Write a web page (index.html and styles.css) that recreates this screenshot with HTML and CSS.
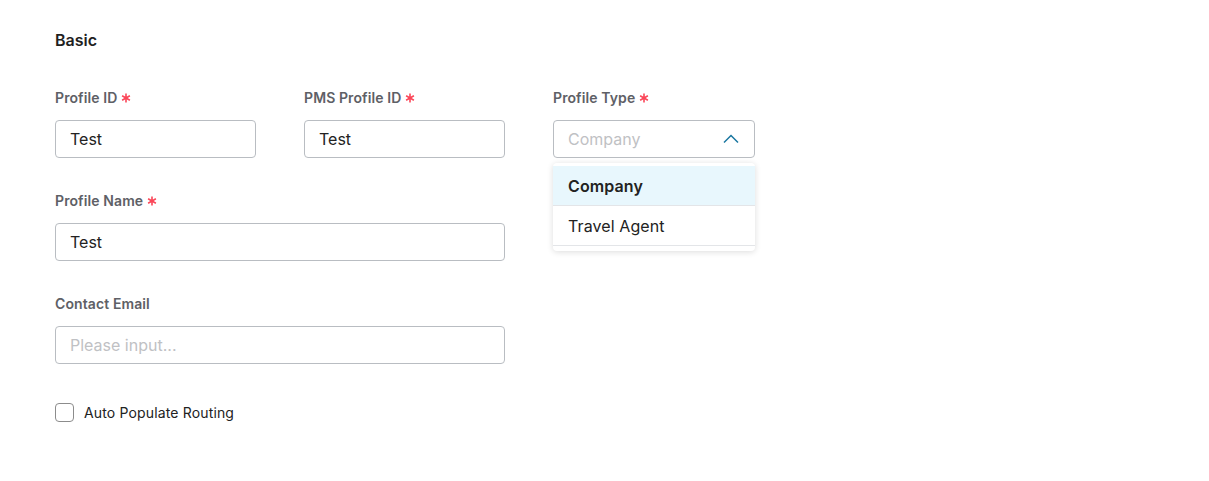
FILE: index.html
```html
<!DOCTYPE html>
<html>
<head>
<meta charset="utf-8">
<link rel="stylesheet" href="styles.css">
</head>
<body>
<div class="page">
  <h2 class="section-title">Basic</h2>
  <div class="row">
    <div class="field w-sm">
      <label class="label">Profile ID<svg class="req" viewBox="0 0 10 10"><path d="M5 0.5V9.5M1.1 2.75L8.9 7.25M1.1 7.25L8.9 2.75"/></svg></label>
      <div class="input">Test</div>
    </div>
    <div class="field w-sm">
      <label class="label">PMS Profile ID<svg class="req" viewBox="0 0 10 10"><path d="M5 0.5V9.5M1.1 2.75L8.9 7.25M1.1 7.25L8.9 2.75"/></svg></label>
      <div class="input">Test</div>
    </div>
    <div class="field w-sm select-wrap">
      <label class="label">Profile Type<svg class="req" viewBox="0 0 10 10"><path d="M5 0.5V9.5M1.1 2.75L8.9 7.25M1.1 7.25L8.9 2.75"/></svg></label>
      <div class="input select"><span class="placeholder">Company</span>
        <svg class="chev" viewBox="0 0 16 10"><path d="M1 8.5L8 1.5L15 8.5"/></svg>
      </div>
      <div class="menu">
        <div class="opt active">Company</div>
        <div class="opt">Travel Agent</div>
      </div>
    </div>
  </div>
  <div class="row">
    <div class="field w-lg">
      <label class="label">Profile Name<svg class="req" viewBox="0 0 10 10"><path d="M5 0.5V9.5M1.1 2.75L8.9 7.25M1.1 7.25L8.9 2.75"/></svg></label>
      <div class="input">Test</div>
    </div>
  </div>
  <div class="row">
    <div class="field w-lg">
      <label class="label">Contact Email</label>
      <div class="input"><span class="placeholder">Please input...</span></div>
    </div>
  </div>
  <label class="check"><span class="box"></span>Auto Populate Routing</label>
</div>
</body>
</html>
```
FILE: styles.css
```css
* { box-sizing: border-box; }
body {
  margin: 0;
  font-family: Inter, "Noto Sans", sans-serif;
  color: #222;
  background: #fff;
}
.page {
  padding: 29px 55px;
}
.section-title {
  margin: 0 0 37px;
  font-size: 16px;
  font-weight: 600;
  line-height: 22px;
  color: #1f1f1f;
}
.row {
  display: flex;
  gap: 48px;
  margin-bottom: 33px;
}
.field { display: flex; flex-direction: column; }
.w-sm { width: 201px; }
.select-wrap { width: 202px; position: relative; }
.w-lg { width: 450px; }
.label {
  display: flex;
  align-items: center;
  font-size: 14px;
  font-weight: 600;
  line-height: 20px;
  letter-spacing: 0.1px;
  color: #5e6066;
  margin-bottom: 12px;
}
.req {
  width: 10px;
  height: 10px;
  margin-left: 4px;
  fill: none;
  stroke: #fb4759;
  stroke-width: 1.6;
}
.input {
  height: 38px;
  border: 1px solid #b9bdc2;
  border-radius: 4px;
  padding: 0 14px;
  display: flex;
  align-items: center;
  font-size: 16px;
  color: #222;
}
.placeholder { color: #bfc1c4; }
.select { justify-content: space-between; }
.chev {
  width: 16px;
  height: 10px;
  margin-right: 1px;
  fill: none;
  stroke: #1a77a0;
  stroke-width: 1.5;
}
.menu {
  position: absolute;
  left: 0;
  top: calc(100% + 5px);
  width: 202px;
  background: #fff;
  border-radius: 4px;
  box-shadow: 0 1px 6px rgba(0, 0, 0, 0.14);
  padding: 3px 0 5px;
  z-index: 2;
}
.opt {
  height: 40px;
  padding: 0 15px;
  display: flex;
  align-items: center;
  font-size: 16px;
  letter-spacing: 0.1px;
  color: #222;
  border-bottom: 1px solid #e3e5e8;
}
.opt.active {
  background: #e8f7fd;
  font-weight: 600;
}
.check {
  display: flex;
  align-items: center;
  font-size: 14px;
  letter-spacing: 0.15px;
  color: #222;
  margin-top: 39px;
}
.box {
  width: 19px;
  height: 19px;
  border: 1px solid #8c8c8c;
  border-radius: 4px;
  margin-right: 10px;
}
```
